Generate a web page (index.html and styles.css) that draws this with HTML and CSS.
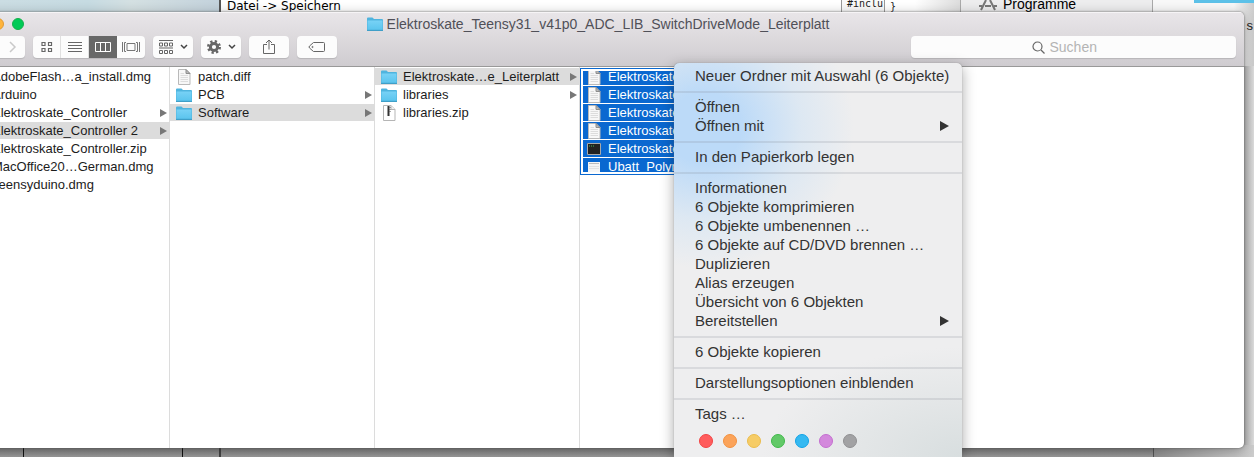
FILE: index.html
```html
<!DOCTYPE html>
<html lang="de">
<head>
<meta charset="utf-8">
<title>Finder</title>
<link rel="stylesheet" href="styles.css">
</head>
<body>
<svg width="0" height="0" class="defs" aria-hidden="true">
  <defs>
    <linearGradient id="fold" x1="0" y1="0" x2="0" y2="1"><stop offset="0" stop-color="#78d2f6"/><stop offset="1" stop-color="#5cc5ee"/></linearGradient>
    <symbol id="folder" viewBox="0 0 16 16"><path d="M0 2.5Q0 1.5 1 1.5H5.5L7 3H15Q16 3 16 4V14.5H0Z" fill="#4fb4de"/><path d="M.5 4.5H15.5V13.5H.5Z" fill="url(#fold)"/><path d="M0 14.5H16" stroke="#3f9fc8"/></symbol>
    <symbol id="doc" viewBox="0 0 16 16"><path d="M2.5.5H10L14 4.500V15.500H2.500Z" fill="#f7f7f7" stroke="#b9b9b9"/><path d="M10 .5V4.500H14Z" fill="#bbb" stroke="#8d8d8d"/><path d="M4.500 4.500H8M4.500 6.500H12M4.500 8.500H12M4.500 10.500H12M4.500 12.500H12" stroke="#dcdcdc"/></symbol>
    <symbol id="zip" viewBox="0 0 16 16"><path d="M2.500.5H10L14 4.500V15.500H2.500Z" fill="#fff" stroke="#b5b5b5"/><path d="M10 .5V4.500H14" fill="#eee" stroke="#b5b5b5"/><path d="M7.500 1V11" stroke="#333" stroke-width="2"/><path d="M9 2V8" stroke="#555" stroke-dasharray="1 1"/></symbol>
    <symbol id="exec" viewBox="0 0 16 16"><path d="M1.500 2.500H14.500V13.500H1.500Z" fill="#222" stroke="#a9a9a9"/><path d="M3 5H8" stroke="#43b45a" stroke-dasharray="1 1"/></symbol>
    <symbol id="sheet" viewBox="0 0 16 16"><path d="M2 3H14V13H2Z" fill="#f5f5f5"/><path d="M3 4.500H13" stroke="#bbb"/><path d="M3 7.500H13M3 9.500H13" stroke="#e2e2e2"/></symbol>
  </defs>
</svg>
<div class="desktop">
  <div class="backdrop-top">
    <div class="map"></div>
    <div class="note">Datei -&gt; Speichern</div>
    <div class="code">#inclu</div>
    <div class="code brace">}</div>
    <div class="sidebar">
      <svg width="20" height="12" viewBox="0 0 20 12" fill="none" stroke="#777" stroke-width="2"><path d="M8 0L3 10M12 0L17 10M1 6H4M7 6H13M16 6H19"/></svg>
      <span>Programme</span>
    </div>
    <div class="finder-back"><span class="folder-edge"></span></div>
  </div>
  <span class="stray">s</span>
  <div class="backdrop-bottom"><i></i><i></i><i></i><i></i><i></i></div>

  <main class="window">
    <header class="chrome">
      <div class="titlebar">
        <span class="lights"><button class="light yellow" aria-label="Minimieren"></button><button class="light green" aria-label="Zoomen"></button></span>
        <h1><svg class="icon"><use href="#folder"/></svg>Elektroskate_Teensy31_v41p0_ADC_LIB_SwitchDriveMode_Leiterplatt</h1>
      </div>
      <div class="toolbar">
        <button class="tool nav" aria-label="Vor"><svg width="8" height="12" viewBox="0 0 8 12" fill="none" stroke="#c9c9c9" stroke-width="1.500"><path d="M1 1L6 6L1 11"/></svg></button>
        <div class="segments">
          <button aria-label="Symbole"><svg width="12" height="12" viewBox="0 0 12 12" fill="none" stroke="#666" stroke-width="1.200"><path d="M1 1.500H4V4.500H1ZM7.500 1.500H10.500V4.500H7.500ZM1 7.500H4V10.500H1ZM7.500 7.500H10.500V10.500H7.500Z"/></svg></button>
          <button aria-label="Liste"><svg width="14" height="12" viewBox="0 0 14 12" stroke="#666"><path d="M0 1.500H14M0 4.500H14M0 7.500H14M0 10.500H14"/></svg></button>
          <button class="active" aria-label="Spalten"><svg width="16" height="12" viewBox="0 0 16 12" fill="none" stroke="#fff"><path d="M.5 1.500H15.500V10.500H.5ZM5.500 1.500V10.500M10.500 1.500V10.500"/></svg></button>
          <button aria-label="Cover Flow"><svg width="20" height="12" viewBox="0 0 20 12" fill="none" stroke="#777"><path d="M6 2.500H14V9.500H6ZM1.500 1V11M5 1.500H3.500V10.500H5M18.500 1V11M15 1.500H16.500V10.500H15"/></svg></button>
        </div>
        <button class="tool" aria-label="Gruppieren"><svg width="16" height="14" viewBox="0 0 16 14" fill="none" stroke="#666"><path d="M1 .5H15M1.500 3H4.500V6H1.500ZM6.500 3H9.500V6H6.500ZM11.500 3H14.500V6H11.500ZM1 8H15M1.500 10.500H4.500V13.500H1.500ZM6.500 10.500H9.500V13.500H6.500ZM11.500 10.500H14.500V13.500H11.500Z"/></svg><svg width="8" height="6" viewBox="0 0 8 6" fill="none" stroke="#444" stroke-width="1.500"><path d="M1 1L4 4L7 1"/></svg></button>
        <button class="tool" aria-label="Aktionen"><svg width="16" height="16" viewBox="-8 -8 16 16"><circle r="3.600" fill="none" stroke="#666" stroke-width="3"/><circle r="5.700" fill="none" stroke="#666" stroke-width="2.600" stroke-dasharray="2.240 2.240"/></svg><svg width="8" height="6" viewBox="0 0 8 6" fill="none" stroke="#444" stroke-width="1.500"><path d="M1 1L4 4L7 1"/></svg></button>
        <button class="tool" aria-label="Teilen"><svg width="12" height="16" viewBox="0 0 12 16" fill="none" stroke="#666"><path d="M4 5.500H.5V14.500H11.500V5.500H8M6 10.500V1M3 4L6 1L9 4"/></svg></button>
        <button class="tool" aria-label="Tags"><svg width="18" height="12" viewBox="0 0 18 12" fill="none" stroke="#666"><path d="M5.500 1.500H15.500Q16.500 1.500 16.500 2.500V9.500Q16.500 10.500 15.500 10.500H5.500L1.500 7Q.5 6 1.500 5Z"/><circle cx="4.500" cy="6" r=".6"/></svg></button>
        <label class="search"><svg width="13" height="13" viewBox="0 0 13 13" fill="none" stroke="#666" stroke-width="1.200"><circle cx="5.500" cy="5.500" r="4.500"/><path d="M9 9L12.500 12.500"/></svg><input type="text" placeholder="Suchen" aria-label="Suchen"></label>
      </div>
    </header>
    <div class="columns">
      <ul class="column first">
        <li>AdobeFlash…a_install.dmg</li>
        <li>Arduino</li>
        <li class="dir">Elektroskate_Controller</li>
        <li class="dir on">Elektroskate_Controller 2</li>
        <li>Elektroskate_Controller.zip</li>
        <li>MacOffice20…German.dmg</li>
        <li>Teensyduino.dmg</li>
      </ul>
      <ul class="column">
        <li><svg class="icon"><use href="#doc"/></svg>patch.diff</li>
        <li class="dir"><svg class="icon"><use href="#folder"/></svg>PCB</li>
        <li class="dir on"><svg class="icon"><use href="#folder"/></svg>Software</li>
      </ul>
      <ul class="column">
        <li class="dir on"><svg class="icon"><use href="#folder"/></svg>Elektroskate…e_Leiterplatt</li>
        <li class="dir"><svg class="icon"><use href="#folder"/></svg>libraries</li>
        <li><svg class="icon"><use href="#zip"/></svg>libraries.zip</li>
      </ul>
      <div class="column last">
        <ul class="selection">
          <li><svg class="icon"><use href="#doc"/></svg>Elektroskate</li>
          <li><svg class="icon"><use href="#doc"/></svg>Elektroskate</li>
          <li><svg class="icon"><use href="#doc"/></svg>Elektroskate</li>
          <li><svg class="icon"><use href="#doc"/></svg>Elektroskate</li>
          <li><svg class="icon"><use href="#exec"/></svg>Elektroskate</li>
          <li><svg class="icon"><use href="#sheet"/></svg>Ubatt_Polyn</li>
        </ul>
      </div>
    </div>
  </main>

  <nav class="menu">
    <button>Neuer Ordner mit Auswahl (6 Objekte)</button>
    <hr>
    <button>Öffnen</button>
    <button class="sub">Öffnen mit</button>
    <hr>
    <button>In den Papierkorb legen</button>
    <hr>
    <button>Informationen</button>
    <button>6 Objekte komprimieren</button>
    <button>6 Objekte umbenennen …</button>
    <button>6 Objekte auf CD/DVD brennen …</button>
    <button>Duplizieren</button>
    <button>Alias erzeugen</button>
    <button>Übersicht von 6 Objekten</button>
    <button class="sub">Bereitstellen</button>
    <hr>
    <button>6 Objekte kopieren</button>
    <hr>
    <button>Darstellungsoptionen einblenden</button>
    <hr>
    <button>Tags …</button>
    <div class="tags">
      <button class="tag red" aria-label="Rot"></button>
      <button class="tag orange" aria-label="Orange"></button>
      <button class="tag gold" aria-label="Gelb"></button>
      <button class="tag lime" aria-label="Grün"></button>
      <button class="tag blue" aria-label="Blau"></button>
      <button class="tag violet" aria-label="Lila"></button>
      <button class="tag gray" aria-label="Grau"></button>
    </div>
  </nav>
</div>
</body>
</html>
```
FILE: styles.css
```css
* { box-sizing: border-box; }
body { margin: 0; font-family: "Liberation Sans", Arial, sans-serif; font-size: 13px; color: #1c1c1c; }
button { border: 0; padding: 0; margin: 0; background: none; font: inherit; color: inherit; }
ul { list-style: none; margin: 0; padding: 0; }
svg { display: block; flex: none; }
.defs { position: absolute; }
.icon { width: 16px; height: 16px; }

.desktop { position: relative; height: 100vh; overflow: hidden; display: flex; flex-direction: column; justify-content: space-between; background: linear-gradient(90deg, #aaa calc(100% - 12px), #ddd); }

.backdrop-top { display: flex; height: 66px; line-height: 13px; white-space: nowrap; }
.map { width: 219px; background: linear-gradient(90deg, #cbdde3, #c6dbe2 40%, #d4e0e2 60%, #c3d2dc); }
.note { flex: 1; border-left: 2px solid #555; background: #fff; padding-left: 6px; font-family: "DejaVu Sans", sans-serif; font-size: 12px; color: #000; }
.code { width: 43px; border-left: 1px solid #999; background: #fafafa; padding-left: 5px; font-family: "DejaVu Sans Mono", monospace; font-size: 10px; line-height: 8px; }
.brace { width: 76px; background: linear-gradient(90deg, #fff 40%, #ddd); line-height: 13px; }
.sidebar { display: flex; gap: 5px; width: 193px; padding-left: 17px; background: #ededee; border: solid #aaa; border-width: 0 1px; font-size: 14px; line-height: 8px; color: #000; }
.finder-back { width: 101px; background: linear-gradient(90deg, #f8f8f8 80%, #ccc); display: flex; justify-content: flex-end; }
.folder-edge { width: 60px; height: 3px; background: #5cc1e8; }
.stray { position: absolute; right: 1px; top: 18px; }
.backdrop-bottom { display: flex; height: 12px; background: linear-gradient(#777, #999); }
.backdrop-bottom i { border-right: 1px solid #111; width: 24px; }
.backdrop-bottom i:nth-child(2) { width: 159px; }
.backdrop-bottom i:nth-child(3) { width: 38px; border-right: 2px solid #444; }
.backdrop-bottom i:nth-child(4) { flex: 1; border-color: #555; }
.backdrop-bottom i:nth-child(5) { width: 100px; border: 0; background: linear-gradient(90deg, #909090, #ccc); }

.window { position: absolute; inset: 12px 10px 9px -40px; display: flex; flex-direction: column; border-radius: 5px; overflow: hidden; background: #fff; box-shadow: 0 0 2px #555, 0 2px 12px rgba(0, 0, 0, .3); }
.chrome { height: 55px; flex: none; background: linear-gradient(#e9e6e9, #cfccd0); border-bottom: 1px solid #999; box-shadow: inset 0 1px #f6f4f6; padding-right: 8px; }
.titlebar { display: grid; grid-template-columns: 1fr auto 1fr; align-items: center; height: 24px; }
.lights { display: flex; gap: 8px; padding-left: 32px; }
.light { width: 12px; height: 12px; border-radius: 50%; }
.yellow { background: #ffb43c; border: 1px solid #e09a35; }
.green { background: #00ca56; border: 1px solid #14b04c; }
h1 { display: flex; align-items: center; gap: 4px; margin: 0; font-size: 14px; font-weight: 400; line-height: 16px; color: #505058; white-space: nowrap; }
.toolbar { display: flex; gap: 8px; }
.tool, .segments, .search { height: 22px; background: #fcfcfc; border-radius: 4px; box-shadow: 0 1px 1px #b7b5b8; }
.tool { display: flex; align-items: center; justify-content: center; gap: 6px; width: 40px; }
.nav { width: 65px; padding-left: 40px; }
.segments { display: flex; overflow: hidden; }
.segments button { display: flex; align-items: center; justify-content: center; width: 28px; border-right: 1px solid #e0e0e0; }
.segments button:last-child { border: 0; }
.segments .active { background: #686868; border-color: #686868; }
.search { display: flex; align-items: center; justify-content: center; gap: 5px; width: 325px; margin-left: auto; }
.search input { width: 66px; border: 0; padding: 0; outline: 0; background: none; font: 14px/16px "Liberation Sans", Arial, sans-serif; }
.search input::placeholder { color: #b4b4b4; }

.columns { display: flex; flex: 1; line-height: 17px; }
.column { width: 205px; padding-top: 1px; border-right: 1px solid #dcdcdc; }
.column.first { width: 210px; }
.column.last { flex: 1; border: 0; }
.column li { display: flex; align-items: center; gap: 6px; height: 17px; margin-bottom: 1px; padding: 0 2px 0 6px; white-space: nowrap; }
.column.first li { padding-left: 32px; }
.dir::after { content: ""; margin-left: auto; border: solid transparent; border-width: 4px 0 4px 7px; border-left-color: #777; }
.on { background: #dcdcdc; }
.selection { position: relative; width: 205px; }
.column .selection li { background: #0a68d0; color: #fff; }
.selection::after { content: ""; position: absolute; inset: 0; box-shadow: inset 0 0 0 1px #0a68d0, inset 0 0 0 3px #fff; }

.menu { position: absolute; left: 674px; top: 63px; bottom: 0; width: 288px; padding-top: 4px; overflow: hidden; border-radius: 5px 5px 0 0; font-size: 15px; line-height: 17px; color: #333;
  background: radial-gradient(ellipse 150px 140px at 30px 65px, #bcdaf8 25%, rgba(210, 228, 245, .6) 65%, rgba(238, 238, 239, 0)), radial-gradient(ellipse 200px 110px at 100% 100%, #d8dedf, rgba(238, 238, 239, 0)), #eeeeef;
  box-shadow: 0 0 1px #777, 0 4px 14px rgba(0, 0, 0, .35); }
.menu > button { display: flex; align-items: center; justify-content: space-between; width: 100%; height: 19px; padding: 0 13px 2px 21px; white-space: nowrap; }
.menu hr { height: 2px; margin: 5px 0; border: 0; background: rgba(120, 130, 140, .18); }
.sub::after { content: ""; border: solid transparent; border-width: 5px 0 5px 9px; border-left-color: #333; }
.tags { display: flex; gap: 10px; padding: 10px 25px; }
.tag { width: 14px; height: 14px; border-radius: 50%; border: 1px solid; }
.red { background: #ff5c5c; border-color: #f24444; }
.orange { background: #fba35a; border-color: #f3913e; }
.gold { background: #f6cc66; border-color: #ebbc4c; }
.lime { background: #62c968; border-color: #40b94a; }
.blue { background: #35b9f1; border-color: #12a3e6; }
.violet { background: #d388dc; border-color: #c46ed0; }
.gray { background: #a2a2a4; border-color: #909092; }
```
